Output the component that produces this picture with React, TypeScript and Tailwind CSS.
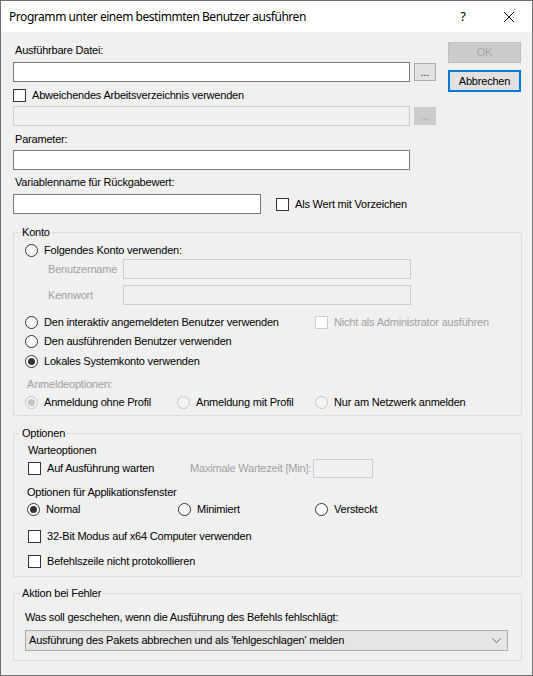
import type { ReactNode } from 'react'

// Windows-Dialog: Programm unter einem bestimmten Benutzer ausführen

function CheckBox({ label, disabled }: { label: string; disabled?: boolean }) {
  return (
    <span className="flex items-center h-[13px]">
      <span
        className={`w-[13px] h-[13px] shrink-0 border bg-white ${
          disabled ? 'border-[#cccccc]' : 'border-[#333333]'
        }`}
      />
      <span className={`ml-[6px] whitespace-nowrap ${disabled ? 'text-[#a0a0a0]' : ''}`}>{label}</span>
    </span>
  )
}

function Radio({ label, checked, disabled }: { label: string; checked?: boolean; disabled?: boolean }) {
  return (
    <span className="flex items-center h-[13px]">
      <span
        className={`w-[13px] h-[13px] shrink-0 rounded-full border flex items-center justify-center ${
          disabled ? 'border-[#c4c4c4] bg-[#f4f4f4]' : 'border-[#333333] bg-white'
        }`}
      >
        {checked && (
          <span className={`w-[7px] h-[7px] rounded-full ${disabled ? 'bg-[#c4c4c4]' : 'bg-[#333333]'}`} />
        )}
      </span>
      <span className="ml-[6px] whitespace-nowrap">{label}</span>
    </span>
  )
}

function TextBox({ className, disabled }: { className: string; disabled?: boolean }) {
  return (
    <div
      className={`border ${disabled ? 'border-[#cccccc] bg-[#f0f0f0]' : 'border-[#7a7a7a] bg-white'} ${className}`}
    />
  )
}

function BrowseButton({ disabled }: { disabled?: boolean }) {
  return (
    <div
      className={`ml-[4px] w-[22px] h-[18px] border flex items-center justify-center text-[10px] leading-none tracking-normal ${
        disabled ? 'border-[#cccccc] bg-[#cccccc] text-[#a0a0a0]' : 'border-[#adadad] bg-[#e1e1e1]'
      }`}
    >
      <span className="mt-[2px]">...</span>
    </div>
  )
}

function Group({ title, className, children }: { title: string; className: string; children: ReactNode }) {
  return (
    <fieldset className={`border border-[#dcdcdc] ${className}`}>
      <legend className="ml-[6px] px-[2px] leading-[13px]">{title}</legend>
      {children}
    </fieldset>
  )
}

function TitleBar() {
  return (
    <div className="h-[31px] bg-white flex items-center shrink-0">
      <span className="pl-[8px] flex-1 text-[12px] tracking-[-0.45px] font-['Segoe_UI','Noto_Sans',sans-serif] text-black">
        Programm unter einem bestimmten Benutzer ausführen
      </span>
      <div className="w-[46px] h-full flex items-center justify-center text-[13px] font-['Noto_Sans',sans-serif]">
        ?
      </div>
      <div className="w-[46px] h-full flex items-center justify-center">
        <svg width="10" height="10" viewBox="0 0 10 10">
          <path d="M0 0L10 10M10 0L0 10" stroke="#000" strokeWidth="1" />
        </svg>
      </div>
    </div>
  )
}

export default function App() {
  return (
    <div className="w-[533px] h-[676px] border border-[#707070] bg-[#f0f0f0] flex flex-col overflow-hidden text-[11px] leading-[13px] tracking-[-0.2px] text-black font-['Liberation_Sans',Arial,sans-serif]">
      <TitleBar />

      <div className="pl-[12px] pr-[10px] flex flex-col">
        {/* Dateiangaben + Dialogknöpfe */}
        <div className="flex">
          <div className="w-[423px] flex flex-col">
            <span className="mt-[12px] ml-[2px] h-[13px]">Ausführbare Datei:</span>
            <div className="mt-[5px] flex items-center">
              <TextBox className="w-[397px] h-[20px]" />
              <BrowseButton />
            </div>
            <div className="mt-[7px]">
              <CheckBox label="Abweichendes Arbeitsverzeichnis verwenden" />
            </div>
            <div className="mt-[4px] flex items-center">
              <TextBox className="w-[397px] h-[20px]" disabled />
              <BrowseButton disabled />
            </div>
            <span className="mt-[7px] ml-[2px] h-[13px]">Parameter:</span>
            <TextBox className="mt-[4px] w-[397px] h-[20px]" />
            <span className="mt-[6px] ml-[2px] h-[13px]">Variablenname für Rückgabewert:</span>
            <div className="mt-[5px] flex items-center">
              <TextBox className="w-[248px] h-[20px]" />
              <div className="ml-[15px]">
                <CheckBox label="Als Wert mit Vorzeichen" />
              </div>
            </div>
          </div>

          <div className="ml-[12px] w-[73px] flex flex-col">
            <div className="mt-[10px] h-[21px] border border-[#bfbfbf] bg-[#cccccc] text-[#a8a8a8] flex items-center justify-center">
              OK
            </div>
            <div className="mt-[7px] h-[22px] border-2 border-[#0078d7] bg-[#e1e1e1] flex items-center justify-center">
              Abbrechen
            </div>
          </div>
        </div>

        {/* Konto */}
        <Group title="Konto" className="mt-[12px] w-[509px]">
          <div className="pl-[11px] pb-[6px] flex flex-col">
            <div className="mt-[5px]">
              <Radio label="Folgendes Konto verwenden:" />
            </div>
            <div className="mt-[2px] flex items-center h-[20px]">
              <span className="ml-[23px] w-[75px] text-[#a0a0a0]">Benutzername</span>
              <TextBox className="w-[288px] h-[20px]" disabled />
            </div>
            <div className="mt-[6px] flex items-center h-[20px]">
              <span className="ml-[23px] w-[75px] text-[#a0a0a0]">Kennwort</span>
              <TextBox className="w-[288px] h-[20px]" disabled />
            </div>
            <div className="mt-[11px] flex items-center">
              <div className="w-[290px]">
                <Radio label="Den interaktiv angemeldeten Benutzer verwenden" />
              </div>
              <CheckBox label="Nicht als Administrator ausführen" disabled />
            </div>
            <div className="mt-[6px]">
              <Radio label="Den ausführenden Benutzer verwenden" />
            </div>
            <div className="mt-[7px]">
              <Radio label="Lokales Systemkonto verwenden" checked />
            </div>
            <span className="mt-[10px] ml-[2px] h-[13px] text-[#a0a0a0]">Anmeldeoptionen:</span>
            <div className="mt-[5px] flex">
              <div className="w-[152px]">
                <Radio label="Anmeldung ohne Profil" checked disabled />
              </div>
              <div className="w-[138px]">
                <Radio label="Anmeldung mit Profil" disabled />
              </div>
              <Radio label="Nur am Netzwerk anmelden" disabled />
            </div>
          </div>
        </Group>

        {/* Optionen */}
        <Group title="Optionen" className="mt-[11px] w-[509px]">
          <div className="pl-[14px] pb-[8px] flex flex-col">
            <span className="mt-[4px] h-[13px]">Warteoptionen</span>
            <div className="mt-[2px] flex items-center h-[19px]">
              <div className="w-[162px]">
                <CheckBox label="Auf Ausführung warten" />
              </div>
              <span className="w-[123px] whitespace-nowrap text-[#a0a0a0]">Maximale Wartezeit [Min]:</span>
              <TextBox className="w-[60px] h-[19px]" disabled />
            </div>
            <span className="mt-[8px] -ml-[1px] h-[13px]">Optionen für Applikationsfenster</span>
            <div className="mt-[4px] -ml-[1px] flex">
              <div className="w-[151px]">
                <Radio label="Normal" checked />
              </div>
              <div className="w-[137px]">
                <Radio label="Minimiert" />
              </div>
              <Radio label="Versteckt" />
            </div>
            <div className="mt-[14px]">
              <CheckBox label="32-Bit Modus auf x64 Computer verwenden" />
            </div>
            <div className="mt-[12px]">
              <CheckBox label="Befehlszeile nicht protokollieren" />
            </div>
          </div>
        </Group>

        {/* Aktion bei Fehler */}
        <Group title="Aktion bei Fehler" className="mt-[10px] w-[509px]">
          <div className="pl-[11px] pb-[9px] flex flex-col">
            <span className="mt-[11px] h-[13px]">Was soll geschehen, wenn die Ausführung des Befehls fehlschlägt:</span>
            <div className="mt-[6px] w-[483px] h-[21px] border border-[#acacac] bg-[#e5e5e5] flex items-center pl-[3px] pr-[6px]">
              <span className="flex-1 whitespace-nowrap">
                Ausführung des Pakets abbrechen und als 'fehlgeschlagen' melden
              </span>
              <svg width="9" height="5" viewBox="0 0 9 5">
                <path d="M0.5 0.5L4.5 4.5L8.5 0.5" fill="none" stroke="#606060" strokeWidth="1" />
              </svg>
            </div>
          </div>
        </Group>
      </div>
    </div>
  )
}
